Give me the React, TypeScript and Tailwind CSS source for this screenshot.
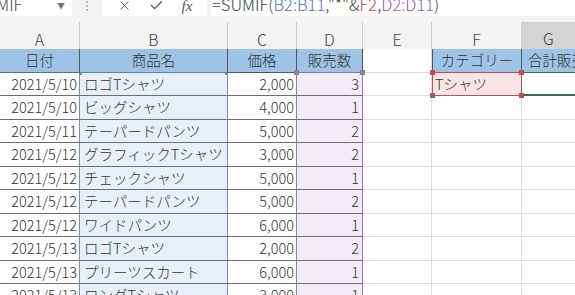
import { X, Check } from "lucide-react";

type Row = { date: string; name: string; price: string; qty: string };

const rows: Row[] = [
  { date: "2021/5/10", name: "ロゴTシャツ", price: "2,000", qty: "3" },
  { date: "2021/5/10", name: "ビッグシャツ", price: "4,000", qty: "1" },
  { date: "2021/5/11", name: "テーパードパンツ", price: "5,000", qty: "2" },
  { date: "2021/5/12", name: "グラフィックTシャツ", price: "3,000", qty: "2" },
  { date: "2021/5/12", name: "チェックシャツ", price: "5,000", qty: "1" },
  { date: "2021/5/12", name: "テーパードパンツ", price: "5,000", qty: "2" },
  { date: "2021/5/12", name: "ワイドパンツ", price: "6,000", qty: "1" },
  { date: "2021/5/13", name: "ロゴTシャツ", price: "2,000", qty: "2" },
  { date: "2021/5/13", name: "プリーツスカート", price: "6,000", qty: "1" },
  { date: "2021/5/13", name: "ロングTシャツ", price: "3,000", qty: "1" },
];

const letters = ["A", "B", "C", "D", "E", "F", "G"];

function Handle({ color, pos }: { color: string; pos: string }) {
  return <span className={`absolute z-10 h-[5px] w-[5px] ${color} ${pos}`} />;
}

export default function App() {
  return (
    <div
      className="h-[295px] w-[575px] overflow-hidden bg-[#f3f3f3] font-light text-[#333]"
      style={{ fontFamily: '"Noto Sans CJK JP", "Noto Sans", sans-serif' }}
    >
      {/* formula bar */}
      <div className="flex h-[16px] items-stretch">
        <div className="relative flex w-[72px] overflow-hidden bg-white">
          <span className="-ml-[24px] -mt-[6px] whitespace-nowrap text-[16px] leading-[20px] text-[#444]">SUMIF</span>
          <span className="absolute right-[7px] top-[2px] text-[8px] leading-none text-[#777]">▼</span>
        </div>
        <div className="flex w-[30px] flex-col items-center gap-[2px] pt-[1px]">
          <span className="h-[2px] w-[2px] rounded-full bg-[#aaa]" />
          <span className="h-[2px] w-[2px] rounded-full bg-[#aaa]" />
          <span className="h-[2px] w-[2px] rounded-full bg-[#aaa]" />
        </div>
        <div className="flex w-[105px] items-start justify-around bg-white px-[6px] text-[#555]">
          <X size={15} strokeWidth={1.4} className="-mt-[2px]" />
          <Check size={15} strokeWidth={2} className="-mt-[2px]" />
          <span
            className="-mt-[4px] text-[15px] italic leading-[20px] text-[#555]"
            style={{ fontFamily: '"Liberation Serif", serif' }}
          >
            fx
          </span>
        </div>
        <div className="ml-[4px] flex-1 overflow-hidden whitespace-nowrap bg-white pl-[1px]">
          <span className="-mt-[6px] block text-[16.5px] leading-[20px] text-[#444]">
            =SUMIF(<span className="text-[#4a78c0]">B2:B11</span>,"*"&amp;
            <span className="text-[#c24a4a]">F2</span>,<span className="text-[#8a63b6]">D2:D11</span>)
          </span>
        </div>
      </div>

      {/* column letters */}
      <div className="mt-[6px] grid h-[27px] grid-cols-[80px_148px_69px_66px_69px_90px_1fr] text-[16px] text-[#444]">
        {letters.map((l) => (
          <div
            key={l}
            className={
              l === "G"
                ? "flex items-center justify-center border-b-2 border-[#217346] bg-[#d4d4d4] pt-[4px]"
                : "flex items-center justify-center border-r border-[#cfcfcf] pt-[4px]"
            }
          >
            {l}
          </div>
        ))}
      </div>

      {/* sheet */}
      <div className="grid auto-rows-[23.5px] grid-cols-[80px_148px_69px_66px_69px_90px_1fr] whitespace-nowrap bg-white text-[14.5px]">
        {/* header row */}
        <div className="flex items-center justify-center border-b border-r border-b-[#5a6f8c] border-r-[#555] bg-[#9dc3e6]">日付</div>
        <div className="flex items-center justify-center border-b border-r border-b-[#5a7fb8] border-r-[#555] bg-[#9dc3e6]">商品名</div>
        <div className="flex items-center justify-center border-b border-r border-b-[#555] border-r-[#555] bg-[#9dc3e6]">価格</div>
        <div className="flex items-center justify-center border-b border-r border-b-[#8a70ad] border-r-[#555] bg-[#9dc3e6]">販売数</div>
        <div className="border-b border-r border-[#dadada]" />
        <div className="flex items-center justify-center border-b border-l border-r border-b-[#c0504d] border-l-[#555] border-r-[#2f6f4f] bg-[#9dc3e6]">
          カテゴリー
        </div>
        <div className="flex items-center overflow-hidden border-b border-b-[#2f6f4f] bg-[#9dc3e6] pl-[6px]">
          合計販売数
        </div>

        {rows.map((r, i) => (
          <Cells key={i} row={r} index={i} />
        ))}
      </div>
    </div>
  );
}

function Cells({ row, index }: { row: Row; index: number }) {
  const first = index === 0;
  return (
    <>
      <div className="flex items-center justify-end border-b border-r border-b-[#6e6e6e] border-r-[#7391bd] pr-[2px]">
        {row.date}
      </div>
      <div className="relative flex items-center overflow-hidden border-b border-r border-b-[#6e6e6e] border-r-[#7391bd] bg-[#e9eff8] pl-[4px]">
        {first && <Handle color="bg-[#6c8cc0]" pos="-left-[3px] -top-[3px]" />}
        {first && <Handle color="bg-[#6c8cc0]" pos="-right-[3px] -top-[3px]" />}
        {row.name}
      </div>
      <div className="flex items-center justify-end border-b border-r border-b-[#6e6e6e] border-r-[#8f7cb0] pr-[2px]">
        {row.price}
      </div>
      <div className="relative flex items-center justify-end border-b border-r border-b-[#6e6e6e] border-r-[#8f7cb0] bg-[#f1ecf5] pr-[3px]">
        {first && <Handle color="bg-[#8f7cb0]" pos="-left-[3px] -top-[3px]" />}
        {first && <Handle color="bg-[#8f7cb0]" pos="-right-[3px] -top-[3px]" />}
        {row.qty}
      </div>
      <div className="border-b border-r border-[#dedede]" />
      {first ? (
        <div className="relative flex items-center border-b border-l border-r border-[#c0504d] bg-[#fbe4e5] pl-[2px]">
          <Handle color="bg-[#c0504d]" pos="-left-[3px] -top-[3px]" />
          <Handle color="bg-[#c0504d]" pos="-right-[3px] -top-[3px]" />
          <Handle color="bg-[#c0504d]" pos="-left-[3px] -bottom-[3px]" />
          <Handle color="bg-[#c0504d]" pos="-right-[3px] -bottom-[3px]" />
          Tシャツ
        </div>
      ) : (
        <div className="border-b border-r border-[#dedede]" />
      )}
      {first ? (
        <div className="border-b-2 border-[#2f6f4f]" />
      ) : (
        <div className="border-b border-[#dedede]" />
      )}
    </>
  );
}
